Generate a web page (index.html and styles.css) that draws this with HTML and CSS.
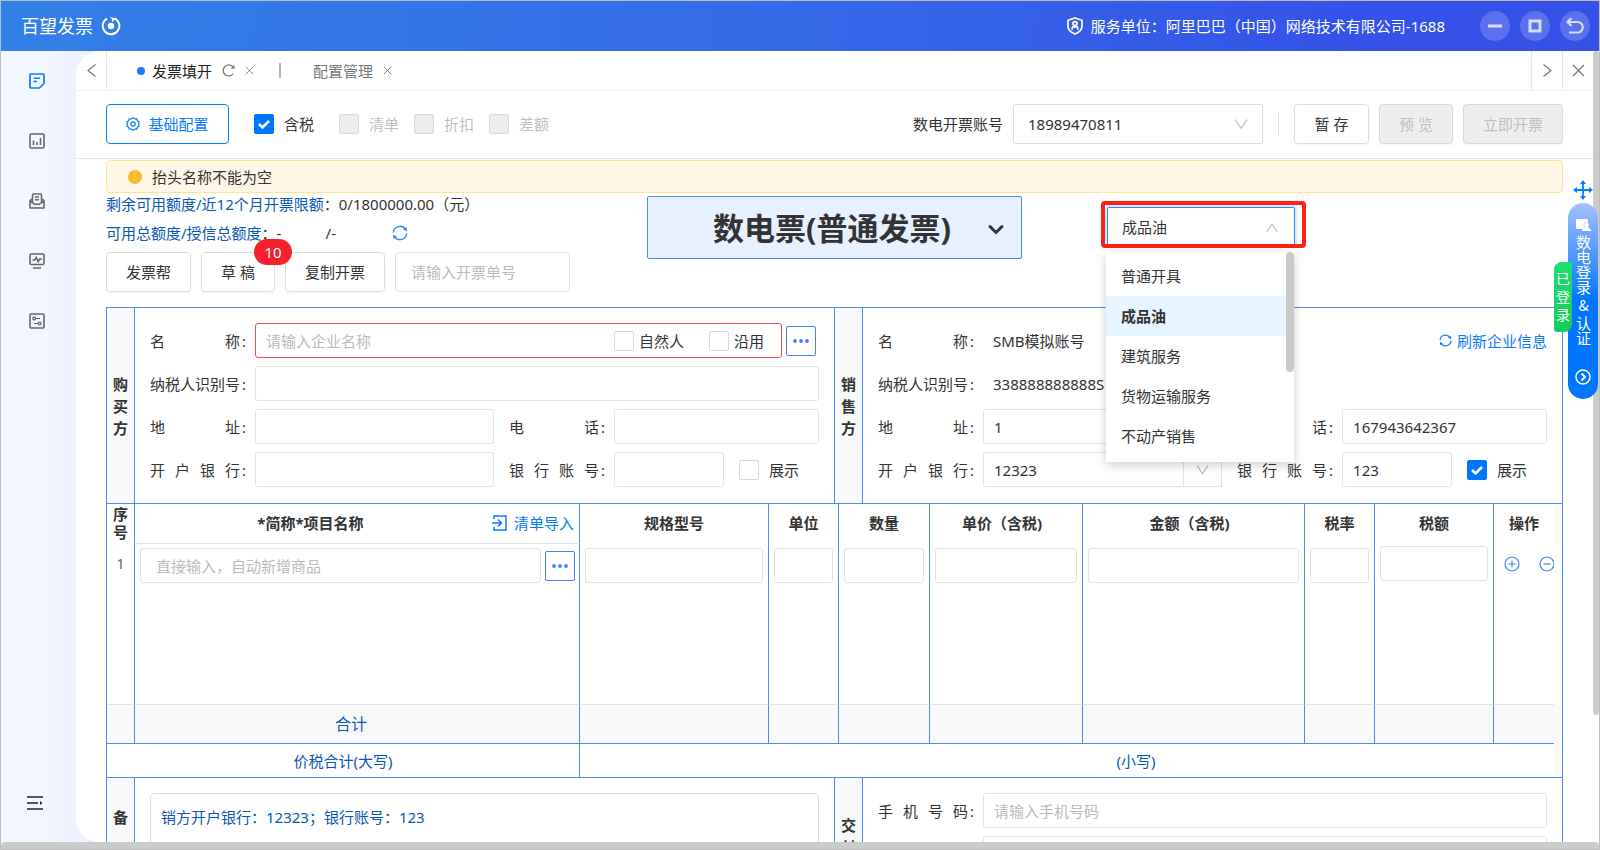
FILE: index.html
```html
<!DOCTYPE html>
<html lang="zh-CN">
<head>
<meta charset="utf-8">
<title>百望发票</title>
<link rel="stylesheet" href="styles.css">
</head>
<body>
<svg class="defs" aria-hidden="true">
  <symbol id="down" viewBox="0 0 14 14"><path d="M1 2.500l6 9 6-9" fill="none" stroke="currentColor" stroke-width="1.200"/></symbol>
  <symbol id="up" viewBox="0 0 14 14"><path d="M1 11.500l6-9 6 9" fill="none" stroke="currentColor" stroke-width="1.200"/></symbol>
  <symbol id="close" viewBox="0 0 12 12"><path d="M1 1l10 10M11 1L1 11" fill="none" stroke="currentColor" stroke-width="1.200"/></symbol>
  <symbol id="sync" viewBox="0 0 16 16"><g fill="none" stroke="currentColor" stroke-width="1.400"><path d="M1.300 7.500A6.700 6.700 0 0 1 13.500 4.300M14.700 8.500A6.700 6.700 0 0 1 2.500 11.700"/></g><path d="M14.800 2.200v4l-3.600-1.500zM1.200 13.800v-4l3.600 1.500z" fill="currentColor"/></symbol>
  <symbol id="dots" viewBox="0 0 16 4"><g fill="currentColor"><circle cx="2" cy="2" r="1.900"/><circle cx="8" cy="2" r="1.900"/><circle cx="14" cy="2" r="1.900"/></g></symbol>
</svg>
<div class="window">
  <header class="titlebar">
    <div class="brand">百望发票
      <svg width="20" height="20" viewBox="0 0 20 20"><path d="M13.500 2.300A8.300 8.300 0 1 1 6 2.600" fill="none" stroke="#fff" stroke-width="2"/><path d="M8.200 .3l5.800 2.500-2.600 3.600c.2-2.400-.8-4.400-3.200-6.100z" fill="#fff"/><circle cx="10" cy="10" r="3.200" fill="#fff"/></svg>
    </div>
    <div class="unit">
      <svg width="16" height="18" viewBox="0 0 16 18"><g fill="none" stroke="#fff" stroke-width="1.700"><path d="M8 1L15 3.300V9c0 4-3 6.500-7 8-4-1.500-7-4-7-8V3.300z"/><circle cx="8" cy="6.600" r="2"/><path d="M5 12.800c0-5 6-5 6 0M8 9v2"/></g></svg>
      <span>服务单位：阿里巴巴（中国）网络技术有限公司-1688</span>
    </div>
    <div class="winbtns">
      <button class="round" aria-label="最小化"><svg width="14" height="14" viewBox="0 0 14 14"><path d="M0 7h14" stroke="#d6dcfb" stroke-width="3"/></svg></button>
      <button class="round" aria-label="最大化"><svg width="14" height="14" viewBox="0 0 14 14"><rect x="2" y="2" width="10" height="10" fill="none" stroke="#d6dcfb" stroke-width="3"/></svg></button>
      <button class="round" aria-label="返回"><svg width="18" height="16" viewBox="0 0 18 16"><path d="M5.500 0L1.500 4l4 4M2 4h9.500a5 5 0 0 1 0 10.500H3" fill="none" stroke="#d6dcfb" stroke-width="2.200"/></svg></button>
    </div>
  </header>

  <div class="body">
    <nav class="sidebar">
      <div class="sidenav">
        <a href="#" class="active" aria-label="发票"><svg width="16" height="16" viewBox="0 0 16 16"><path d="M2 1h12q1 0 1 1v8.500L10.500 15H2q-1 0-1-1V2q0-1 1-1z" fill="none" stroke="currentColor" stroke-width="1.700" stroke-linejoin="round"/><path d="M4.500 5.200h6.500M4.500 8.500h3.500" fill="none" stroke="currentColor" stroke-width="1.500"/></svg></a>
        <a href="#" aria-label="统计"><svg width="16" height="16" viewBox="0 0 16 16"><rect x="1" y="1" width="14" height="14" rx="1" fill="none" stroke="currentColor" stroke-width="1.600"/><path d="M4.500 7.500V12M8 9v3M11.500 5v7" stroke="currentColor" stroke-width="1.500"/></svg></a>
        <a href="#" aria-label="邮件"><svg width="16" height="16" viewBox="0 0 16 16"><g fill="none" stroke="currentColor" stroke-width="1.500" stroke-linejoin="round"><path d="M3.500 6L1 7.500V15h14V7.500L12.500 6M1 8l5 3.300h4L15 8"/><path d="M3.500 9V2q0-1 1-1h7q1 0 1 1v7M6 4h4M6 6.700h4"/></g></svg></a>
        <a href="#" aria-label="监控"><svg width="16" height="16" viewBox="0 0 16 16"><g fill="none" stroke="currentColor" stroke-width="1.600"><rect x="1" y="1" width="14" height="10.500" rx="1"/><path d="M4 15h8M3.500 7h2.200l1.500-2.500 2 4L10.700 6H13"/></g></svg></a>
        <a href="#" aria-label="设置"><svg width="16" height="16" viewBox="0 0 16 16"><g fill="none" stroke="currentColor"><rect x="1" y="1" width="14" height="14" rx="1" stroke-width="1.600"/><g stroke-width="1.200"><circle cx="5.200" cy="5.500" r="1.400"/><path d="M6.600 5.500H11M5 10.500h4.200"/><circle cx="10.700" cy="10.500" r="1.400"/></g></g></svg></a>
      </div>
      <button class="fold" aria-label="展开菜单"><svg width="16" height="16" viewBox="0 0 16 16"><path d="M0 2h16M0 8h11M0 14h16" stroke="#222" stroke-width="1.500"/><path d="M13 6l2.500 2-2.500 2z" fill="#222"/></svg></button>
    </nav>

    <main class="main">
      <div class="tabs">
        <button class="tabarrow first" aria-label="向左"><svg width="9" height="13" viewBox="0 0 9 13"><path d="M8.500 .5L1 6.500l7.500 6" fill="none" stroke="#777" stroke-width="1.200"/></svg></button>
        <div class="tab current"><i class="dot"></i><span>发票填开</span>
          <svg class="reload" width="13" height="13" viewBox="0 0 13 13"><path d="M11.300 9.500A5.500 5.500 0 1 1 11 3" fill="none" stroke="#777" stroke-width="1.300"/><path d="M12.500 .8v4H8.600z" fill="#777"/></svg>
          <svg class="x" width="9" height="9"><use href="#close"/></svg></div>
        <i class="bar"></i>
        <div class="tab"><span>配置管理</span><svg class="x" width="9" height="9"><use href="#close"/></svg></div>
        <div class="tabend">
          <button class="tabarrow" aria-label="向右"><svg width="9" height="13" viewBox="0 0 9 13"><path d="M.5 .5L8 6.500l-7.500 6" fill="none" stroke="#777" stroke-width="1.200"/></svg></button>
          <button class="tabarrow" aria-label="关闭"><svg class="x" width="13" height="13"><use href="#close"/></svg></button>
        </div>
      </div>

      <div class="toolbar">
        <button class="btn primary"><svg width="14" height="14" viewBox="0 0 14 14"><g fill="none" stroke="currentColor" stroke-width="1.200"><path d="M7 .7l1.700 1.200 2.100-.1.600 2 1.800 1.200L12.500 7l.7 2-1.800 1.200-.6 2-2.100-.1L7 13.300l-1.700-1.200-2.100.1-.6-2L.8 9l.7-2-.7-2 1.800-1.200.6-2 2.100.1z"/><circle cx="7" cy="7" r="2.200"/></g></svg>基础配置</button>
        <div class="checks">
          <label class="check"><input type="checkbox" checked>含税</label>
          <label class="check off"><input type="checkbox" disabled>清单</label>
          <label class="check off"><input type="checkbox" disabled>折扣</label>
          <label class="check off"><input type="checkbox" disabled>差额</label>
        </div>
        <label class="account" for="account">数电开票账号</label>
        <div class="selectbox accountbox"><select id="account"><option>18989470811</option></select><svg class="chev" width="14" height="14"><use href="#down"/></svg></div>
        <i class="vline"></i>
        <div class="actions">
          <button class="btn save">暂 存</button>
          <button class="btn preview" disabled>预 览</button>
          <button class="btn issue" disabled>立即开票</button>
        </div>
      </div>

      <div class="page">
        <div class="alert" role="alert"><svg width="14" height="14" viewBox="0 0 14 14"><circle cx="7" cy="7" r="7" fill="#fbb829"/><path d="M7 3v5M7 9.500V11" stroke="#fde3a4"/></svg>抬头名称不能为空</div>

        <div class="summary">
          <div class="quota">
            <p><span class="navy">剩余可用额度/近12个月开票限额</span>：0/1800000.00（元）</p>
            <p class="credit"><span class="navy">可用总额度/授信总额度</span>：<span class="avail">-</span><span class="total">/-</span><button class="icon" aria-label="刷新额度"><svg width="16" height="16"><use href="#sync"/></svg></button></p>
            <div class="quick">
              <button class="btn helper">发票帮</button>
              <button class="btn draft">草 稿<span class="badge">10</span></button>
              <button class="btn copy">复制开票</button>
              <input class="field order" type="text" placeholder="请输入开票单号" aria-label="开票单号">
            </div>
          </div>
          <div class="kind">
            <select aria-label="发票类型"><option>数电票(普通发票)</option></select>
            <svg width="16" height="12" viewBox="0 0 16 12"><path d="M2 2.500l6 6 6-6" fill="none" stroke="#333" stroke-width="3" stroke-linecap="round"/></svg>
          </div>
          <div class="special">
            <div class="marked">
              <div class="selectbox open"><select aria-label="特定业务"><option>成品油</option></select><svg class="chev" width="14" height="12"><use href="#up"/></svg></div>
              <ul class="menu" role="listbox">
                <li role="option">普通开具</li>
                <li role="option" class="chosen" aria-selected="true">成品油</li>
                <li role="option">建筑服务</li>
                <li role="option">货物运输服务</li>
                <li role="option">不动产销售</li>
              </ul>
            </div>
          </div>
        </div>

        <div class="invoice">
          <div class="parties">
            <div class="side"><span>购</span><span>买</span><span>方</span></div>
            <div class="party">
              <div class="line">
                <label class="cap" for="b-name"><span>名称</span>:</label>
                <div class="namebox"><input id="b-name" type="text" placeholder="请输入企业名称">
                  <label class="check tight"><input type="checkbox">自然人</label>
                  <label class="check tight"><input type="checkbox">沿用</label></div>
                <button class="more" aria-label="选择企业"><svg width="16" height="4"><use href="#dots"/></svg></button>
              </div>
              <div class="line"><label class="cap" for="b-tax"><span>纳税人识别号</span>:</label><input id="b-tax" class="field grow" type="text"></div>
              <div class="line">
                <label class="cap" for="b-addr"><span>地址</span>:</label><input id="b-addr" class="field left" type="text">
                <label class="cap" for="b-tel"><span>电话</span>:</label><input id="b-tel" class="field right" type="text">
              </div>
              <div class="line">
                <label class="cap" for="b-bank"><span>开户银行</span>:</label><input id="b-bank" class="field left" type="text">
                <label class="cap" for="b-acc"><span>银行账号</span>:</label>
                <div class="right pair"><input id="b-acc" class="field" type="text"><label class="check"><input type="checkbox">展示</label></div>
              </div>
            </div>
            <div class="side"><span>销</span><span>售</span><span>方</span></div>
            <div class="party">
              <div class="line"><span class="cap"><span>名称</span>:</span><span class="value">SMB模拟账号</span>
                <a href="#" class="refresh"><svg width="13" height="13"><use href="#sync"/></svg>刷新企业信息</a></div>
              <div class="line"><span class="cap"><span>纳税人识别号</span>:</span><span class="value">338888888888S</span></div>
              <div class="line">
                <label class="cap" for="s-addr"><span>地址</span>:</label><input id="s-addr" class="field left" type="text" value="1">
                <label class="cap" for="s-tel"><span>电话</span>:</label><input id="s-tel" class="field right" type="text" value="167943642367">
              </div>
              <div class="line">
                <label class="cap" for="s-bank"><span>开户银行</span>:</label>
                <div class="left combo"><input id="s-bank" class="field" type="text" value="12323"><button aria-label="选择银行"><svg width="13" height="13"><use href="#down"/></svg></button></div>
                <label class="cap" for="s-acc"><span>银行账号</span>:</label>
                <div class="right pair"><input id="s-acc" class="field" type="text" value="123"><label class="check"><input type="checkbox" checked>展示</label></div>
              </div>
            </div>
          </div>

          <table class="items">
            <colgroup><col class="c-no"><col><col class="c-spec"><col class="c-unit"><col class="c-qty"><col class="c-price"><col class="c-amount"><col class="c-unit"><col class="c-tax"><col class="c-op"><col class="c-gutter"></colgroup>
            <thead>
              <tr>
                <th class="no">序<br>号</th>
                <th class="name"><div class="namehead"><span>*简称*项目名称</span><a href="#"><svg width="15" height="16" viewBox="0 0 15 16"><path d="M2 4V1h12v14H2v-3M0 8h9M6 4.500L9.500 8 6 11.500" fill="none" stroke="currentColor" stroke-width="1.500"/></svg>清单导入</a></div></th>
                <th>规格型号</th><th>单位</th><th>数量</th><th class="taxed">单价（含税)</th><th class="taxed">金额（含税)</th><th>税率</th><th>税额</th><th class="op">操作</th><th class="gutter"></th>
              </tr>
            </thead>
            <tbody>
              <tr>
                <td class="no">1</td>
                <td class="goodscell"><div class="goods"><input class="field" type="text" placeholder="直接输入，自动新增商品" aria-label="项目名称"><button class="more" aria-label="选择商品"><svg width="16" height="4"><use href="#dots"/></svg></button></div></td>
                <td><input class="field" type="text" aria-label="规格型号"></td>
                <td><input class="field" type="text" aria-label="单位"></td>
                <td><input class="field" type="text" aria-label="数量"></td>
                <td><input class="field" type="text" aria-label="单价"></td>
                <td><input class="field" type="text" aria-label="金额"></td>
                <td><input class="field" type="text" aria-label="税率"></td>
                <td class="taxcell"><input class="field" type="text" aria-label="税额"></td>
                <td class="op"><div class="ops"><button class="icon" aria-label="增加"><svg width="16" height="16" viewBox="0 0 16 16"><g fill="none" stroke="currentColor" stroke-width="1.200"><circle cx="8" cy="8" r="7"/><path d="M4.500 8h7M8 4.500v7"/></g></svg></button><button class="icon" aria-label="删除"><svg width="16" height="16" viewBox="0 0 16 16"><g fill="none" stroke="currentColor" stroke-width="1.200"><circle cx="8" cy="8" r="7"/><path d="M4.500 8h7"/></g></svg></button></div></td>
                <td class="blank"></td>
              </tr>
            </tbody>
            <tfoot>
              <tr class="sum"><td></td><td class="sumname">合计</td><td></td><td></td><td></td><td></td><td></td><td></td><td></td><td class="op"></td><td class="gutter"></td></tr>
              <tr class="grand"><td colspan="2">价税合计(大写)</td><td colspan="8" class="lower">(小写)</td><td class="gutter"></td></tr>
            </tfoot>
          </table>

          <div class="parties rest">
            <div class="side remark"><span>备</span></div>
            <div class="party"><textarea class="field memo" rows="5" aria-label="备注">销方开户银行：12323；银行账号：123</textarea></div>
            <div class="side deliver"><span>交</span><span>付</span></div>
            <div class="party">
              <div class="line"><label class="cap" for="phone"><span>手机号码</span>:</label><input id="phone" class="field grow" type="text" placeholder="请输入手机号码"></div>
              <div class="line"><span class="cap"></span><input class="field grow" type="text" aria-label="邮箱"></div>
            </div>
          </div>
        </div>
      </div>
    </main>
    <div class="vscroll"><i></i></div>

    <aside class="float">
      <svg width="20" height="20" viewBox="0 0 20 20"><path d="M10 2v16M2 10h16" stroke="#0a7cff" stroke-width="1.800"/><path d="M10 0l3 4H7zM10 20l3-4H7zM0 10l4-3v6zM20 10l-4-3v6z" fill="#0a7cff"/></svg>
      <button class="pill">
        <svg width="15" height="12" viewBox="0 0 15 12"><rect width="12" height="10" rx="1" fill="#fff"/><circle cx="10.500" cy="6" r="2.600" fill="#fff" stroke="#9dbcff" stroke-width=".6"/><path d="M6 12c0-5 9-5 9 0z" fill="#fff"/></svg>
        <span class="vertical">数电登录<span class="amp">&amp;</span>认证</span>
        <svg class="go" width="16" height="16" viewBox="0 0 16 16"><g fill="none" stroke="#fff" stroke-width="1.500"><circle cx="8" cy="8" r="7"/><path d="M6.500 4.500L10 8l-3.500 3.500" stroke-width="2"/></g></svg>
      </button>
      <div class="tag"><span>已</span><span>登</span><span>录</span></div>
    </aside>
  </div>
  <div class="hscroll"></div>
</div>
</body>
</html>
```

FILE: styles.css
```css
* { box-sizing: border-box; }

html, body { height: 100%; }

body {
  margin: 0;
  font: 15px/22px "Noto Sans", "Noto Sans CJK SC", sans-serif;
  color: #333;
  overflow: hidden;
}

button, input, select, textarea { font: inherit; color: inherit; margin: 0; }
button { padding: 0; background: none; border: 0; }
a { color: #0a7cff; text-decoration: none; }
p, ul { margin: 0; padding: 0; list-style: none; }
svg { display: block; flex: none; }
input::placeholder { color: #bbb; opacity: 1; }
.defs { position: absolute; width: 0; height: 0; }
.navy { color: #0958b5; }

.window {
  display: flex;
  flex-direction: column;
  height: 100vh;
  border: 1px solid #bdbdbd;
  overflow: hidden;
}

/* title bar */
.titlebar {
  flex: none;
  display: flex;
  align-items: center;
  height: 50px;
  padding: 0 9px 0 20px;
  color: #fff;
  background: linear-gradient(100deg, #3380e8 0%, #3669e8 50%, #3452e8 85%);
}
.brand { display: flex; align-items: center; gap: 8px; flex: 1; font-size: 18px; line-height: 24px; }
.unit { display: flex; align-items: center; gap: 8px; }
.winbtns { display: flex; gap: 10px; margin-left: 35px; }
.round {
  display: grid;
  place-items: center;
  width: 30px;
  height: 30px;
  border-radius: 50%;
  background: #5b72ed;
}

/* frame */
.body { position: relative; flex: 1; min-height: 0; display: flex; background: #eef2fe; }
.sidebar {
  flex: none;
  display: flex;
  flex-direction: column;
  justify-content: space-between;
  width: 75px;
  padding: 22px 0 31px;
  background: linear-gradient(90deg, #f1f6ff 60%, #edf1fd);
}
.sidenav { display: flex; flex-direction: column; align-items: center; gap: 44px; color: #666; padding-right: 3px; }
.sidenav a { color: inherit; }
.sidenav .active { color: #0a7cff; }
.fold { align-self: center; margin-right: 8px; }
.main {
  flex: 1;
  min-width: 0;
  background: #fff;
  border-radius: 24px 0 0 24px;
  overflow: hidden;
}
.vscroll { flex: none; width: 6px; background: #fff; }
.vscroll i { display: block; height: 84%; border-radius: 3px; background: #cbcbcb; }
.hscroll { flex: none; height: 7px; border-radius: 4px 4px 0 0; background: #cbcbcb; }

/* tabs */
.tabs { display: flex; align-items: center; height: 40px; border-bottom: 1px solid #eee; }
.tabarrow { display: grid; place-items: center; width: 31px; height: 39px; border-left: 1px solid #e6e6e6; }
.tabarrow.first { border-left: 0; border-right: 1px solid #e6e6e6; }
.tab { display: flex; align-items: center; color: #777; }
.tab.current { color: #222; margin-left: 30px; }
.tab .x { margin-left: 10px; }
.x { color: #777; }
.reload { margin-left: 10px; }
.dot { width: 8px; height: 8px; margin-right: 7px; border-radius: 50%; background: #1f7dfb; }
.bar { width: 2px; height: 15px; margin: 0 32px 0 25px; background: #b5b5b5; }
.tabend { display: flex; margin-left: auto; }

/* toolbar */
.toolbar { display: flex; align-items: center; height: 68px; padding: 0 30px 2px; border-bottom: 1px solid #e4e4e4; }
.btn {
  height: 40px;
  border: 1px solid #ddd;
  border-radius: 4px;
  background: #fff;
  box-shadow: 0 2px 2px rgba(0, 0, 0, .03);
}
.btn:disabled { color: #bfbfbf; background: #eee; border-color: #d9d9d9; }
.primary { display: flex; align-items: center; justify-content: center; gap: 8px; width: 123px; color: #0a7cff; border-color: #0a7cff; }
.checks { display: flex; gap: 15px; margin-left: 25px; flex: 1; }
.check { display: flex; align-items: center; gap: 10px; white-space: nowrap; }
.checks .check:first-child { margin-right: 10px; }
.check.off { color: #bfbfbf; }
.check.tight { gap: 5px; }
.check input {
  appearance: none;
  width: 20px;
  height: 20px;
  border: 1px solid #d9d9d9;
  border-radius: 2px;
  background: #fff;
}
.check input:disabled { background: #eee; }
.check input:checked {
  border-color: #0075ff;
  background: #0075ff url("data:image/svg+xml,%3Csvg xmlns='http://www.w3.org/2000/svg' viewBox='0 0 18 18'%3E%3Cpath d='M4 9l3.500 3.500L14 6' fill='none' stroke='white' stroke-width='2.600'/%3E%3C/svg%3E");
}
.selectbox { position: relative; }
.selectbox select {
  appearance: none;
  width: 100%;
  height: 40px;
  padding: 0 36px 0 14px;
  border: 1px solid #ddd;
  border-radius: 2px;
  background: #fff;
}
.chev { position: absolute; right: 15px; top: 13px; color: #bbb; pointer-events: none; }
.account { margin-right: 10px; }
.accountbox { width: 250px; }
.vline { width: 1px; height: 24px; margin: 0 15px; background: #e0e0e0; }
.actions { display: flex; gap: 10px; }
.save { width: 75px; }
.preview { width: 74px; }
.issue { width: 100px; }

/* page */
.page { padding: 1px 30px 0; }
.alert {
  display: flex;
  align-items: center;
  gap: 10px;
  height: 33px;
  padding: 0 21px;
  border: 1px solid #fde38e;
  border-radius: 4px;
  background: #fff7e5;
}
.summary { display: grid; grid-template-columns: 541fr 375fr 541fr; height: 114px; }
.credit { display: flex; margin: 7px 0 8px; }
.avail { width: 49px; }
.total { width: 66px; }
.icon { color: #3f83f8; }
.quick { display: flex; gap: 10px; }
.helper { width: 85px; }
.draft { position: relative; width: 74px; }
.copy { width: 100px; }
.badge {
  position: absolute;
  top: -14px;
  right: -18px;
  z-index: 1;
  width: 38px;
  height: 26px;
  border-radius: 13px;
  color: #fff;
  line-height: 26px;
  background: #f5222d;
}
.field {
  min-width: 0;
  width: 100%;
  height: 35px;
  padding: 0 10px;
  border: 1px solid #e2e2e2;
  border-radius: 3px;
  background: #fff;
}
.order { width: 175px; height: 40px; padding: 0 15px; border-radius: 4px; }
.kind { position: relative; align-self: start; margin-top: 3px; }
.kind select {
  appearance: none;
  width: 100%;
  height: 63px;
  padding: 0 68px 0 65px;
  border: 1px solid #4d8bee;
  border-radius: 2px;
  background: #e6f0ff;
  font-size: 31px;
  font-weight: 700;
  line-height: 48px;
}
.kind svg { position: absolute; right: 18px; top: 28px; pointer-events: none; }
.special { padding: 8px 0 0 79px; }
.marked { position: relative; width: 205px; height: 47px; border: 4px solid #ff2015; border-radius: 4px; }
.open { height: 39px; padding: 2px 7px 0 2px; overflow: hidden; }
.open select { border-color: #2f8ff8; box-shadow: 0 0 0 2px #d4e8ff; }
.open .chev { right: 23px; top: 17px; }
.menu {
  position: absolute;
  left: 1px;
  top: 47px;
  z-index: 2;
  width: 188px;
  padding: 4px 0 6px;
  background: #fff;
  box-shadow: 0 3px 10px rgba(0, 0, 0, .2);
}
.menu::after {
  content: "";
  position: absolute;
  right: 0;
  top: 0;
  width: 8px;
  height: 120px;
  border-radius: 4px;
  background: #c9c9c9;
}
.menu li { padding: 0 15px; line-height: 40px; }
.menu .chosen { background: #e6f5ff; font-weight: 700; }

/* invoice */
.invoice { border: 1px solid #4d8bee; }
.parties { display: grid; grid-template-columns: 28px minmax(0, 1fr) 29px minmax(0, 1fr); border-bottom: 1px solid #4d8bee; }
.side {
  display: flex;
  flex-direction: column;
  align-items: center;
  justify-content: center;
  border-right: 1px solid #4d8bee;
  background: #f8f9fb;
  font-weight: 700;
}
.party + .side { border-left: 1px solid #4d8bee; }
.party { display: flex; flex-direction: column; gap: 8px; padding: 15px 15px 16px; }
.line { display: flex; align-items: center; height: 35px; }
.cap { flex: none; display: flex; gap: 2px; width: 105px; }
.cap span { width: 90px; text-align: justify; text-align-last: justify; }
.grow { flex: 1; }
.left { flex: 1 1 0; width: 0; margin-right: 15px; }
.right { flex: none; width: calc((100% - 225px) * 6 / 13); }
.pair { display: flex; align-items: center; gap: 15px; }
.pair .field { flex: 1; }
.pair .check { margin-right: 20px; }
.combo { display: flex; }
.combo .field { flex: 1; border-radius: 3px 0 0 3px; border-right: 0; }
.combo button { display: grid; place-items: center; width: 39px; border: 1px solid #e2e2e2; color: #bbb; }
.value { margin-left: 10px; flex: 1; }
.refresh { display: flex; align-items: center; gap: 5px; }
.namebox {
  flex: 1;
  display: flex;
  align-items: center;
  gap: 25px;
  height: 35px;
  padding: 0 17px 0 10px;
  border: 1px solid #f5484d;
  border-radius: 3px;
}
.namebox > input { flex: 1; min-width: 0; padding: 0; border: 0; background: none; }
.more {
  flex: none;
  display: grid;
  place-items: center;
  width: 30px;
  height: 30px;
  margin: 0 3px 0 4px;
  border: 1px solid #4080ff;
  border-radius: 2px;
  color: #4080ff;
  background: #fff;
}

/* items */
.items { width: 100%; table-layout: fixed; border-spacing: 0; text-align: center; }
.c-no { width: 28px; }
.c-spec { width: 189px; }
.c-unit { width: 70px; }
.c-qty { width: 91px; }
.c-price { width: 153px; }
.c-amount { width: 222px; }
.c-tax { width: 119px; }
.c-op { width: 60px; }
.c-gutter { width: 8px; }
.items th, .items td { padding: 0; border-right: 1px solid #4d8bee; }
.items th { height: 40px; padding-bottom: 2px; }
.items .taxed { padding-right: 8px; }
.items .no { line-height: 18px; }
.items .name { border-bottom: 1px solid #e4e4e4; }
.items .op, .items .gutter, .items .blank { border-right: 0; }
.gutter { background: #fafafa; }
.namehead { display: flex; align-items: center; padding-right: 5px; }
.namehead span { flex: 1; padding-right: 6px; }
.namehead a { display: flex; align-items: center; gap: 7px; font-weight: 400; }
.items tbody td { height: 160px; padding: 4px 5px; vertical-align: top; }
.items tbody .no { padding: 10px 0 0; color: #666; }
.items tbody .blank { padding: 0; }
.items tbody .taxcell { padding-top: 2px; }
.items tbody .goodscell { padding-right: 4px; }
.goods { display: flex; align-items: center; }
.goods .field { padding: 0 15px; }
.goods .more { margin-right: 0; }
.items tbody .op { padding: 12px 0 0 10px; }
.ops { display: flex; gap: 19px; overflow: hidden; }
.items .sum td { height: 40px; border-top: 1px solid #e2e2e2; border-bottom: 1px solid #4d8bee; color: #0958b5; background: #f8f9fb; font-size: 16px; }
.items .sum .gutter { border-color: #fafafa; background: #fafafa; }
.items .sum .sumname { padding-right: 12px; }
.items .grand td { height: 34px; border-bottom: 1px solid #4d8bee; color: #0958b5; }
.items .grand .lower { padding-left: 138px; border-right: 0; }

.rest { border-bottom: 0; }
.remark, .deliver { justify-content: flex-start; padding-top: 28px; }
.deliver { padding-top: 36px; }
.memo { display: block; height: auto; padding: 12px 10px; border-color: #d9d9d9; border-radius: 5px; color: #0958b5; resize: none; }

/* floating entry */
.float { position: absolute; right: 1px; top: 129px; display: flex; flex-direction: column; align-items: center; gap: 3px; }
.pill {
  display: flex;
  flex-direction: column;
  align-items: center;
  width: 30px;
  height: 196px;
  padding-top: 16px;
  border-radius: 15px;
  color: #fff;
  background: linear-gradient(#a5bfff, #0075ff 50%);
}
.pill svg { margin-bottom: 4px; }
.vertical {
  writing-mode: vertical-rl;
  text-orientation: upright;
  white-space: nowrap;
  font-family: "Noto Sans CJK SC", sans-serif;
}
.amp { margin: 3px 0; }
.pill .go { margin: auto 0 14px; }
.tag {
  position: absolute;
  right: 26px;
  top: 82px;
  display: flex;
  flex-direction: column;
  align-items: center;
  width: 18px;
  padding: 8px 0;
  border-radius: 8px 0 8px 3px;
  color: #fff;
  font-size: 14px;
  line-height: 18px;
  background: linear-gradient(#1be070, #15cc5e);
}
```
